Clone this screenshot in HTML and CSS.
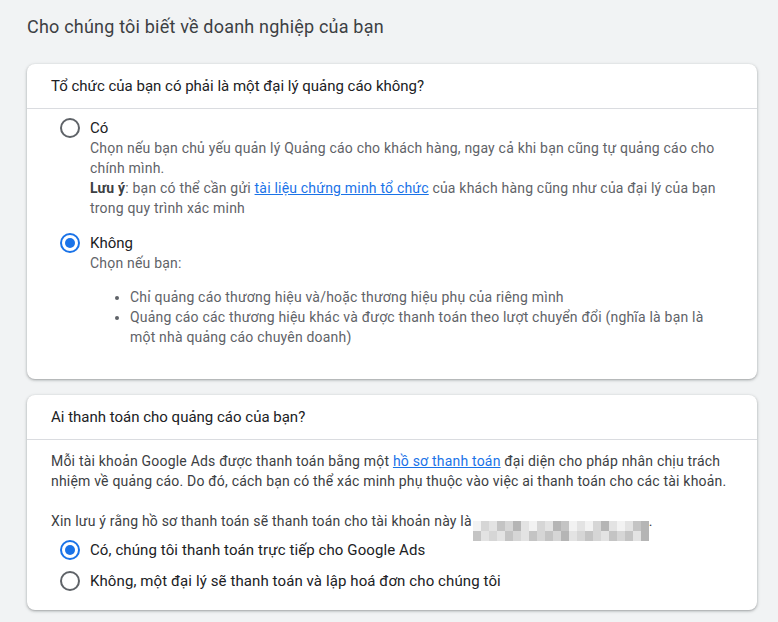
FILE: index.html
```html
<!DOCTYPE html>
<html lang="vi">
<head>
    <meta charset="UTF-8">
    <meta name="viewport" content="width=device-width, initial-scale=1.0">
    <title>Doanh nghiệp của bạn</title>
    <link rel="stylesheet" href="styles.css">
</head>
<body>
    <div class="page">
        <h1 class="page-title">Cho chúng tôi biết về doanh nghiệp của bạn</h1>

        <div class="card">
            <div class="card-header">Tổ chức của bạn có phải là một đại lý quảng cáo không?</div>
            <div class="card-body card-body-agency">
                <div class="option">
                    <span class="radio"></span>
                    <div class="option-text">
                        <div class="option-label">Có</div>
                        <div class="option-desc">
                            Chọn nếu bạn chủ yếu quản lý Quảng cáo cho khách hàng, ngay cả khi bạn cũng tự quảng cáo cho chính mình.<br>
                            <strong>Lưu ý</strong>: bạn có thể cần gửi <a href="#">tài liệu chứng minh tổ chức</a> của khách hàng cũng như của đại lý của bạn trong quy trình xác minh
                        </div>
                    </div>
                </div>
                <div class="option option-second">
                    <span class="radio checked"></span>
                    <div class="option-text">
                        <div class="option-label">Không</div>
                        <div class="option-desc">
                            Chọn nếu bạn:
                            <ul>
                                <li>Chỉ quảng cáo thương hiệu và/hoặc thương hiệu phụ của riêng mình</li>
                                <li>Quảng cáo các thương hiệu khác và được thanh toán theo lượt chuyển đổi (nghĩa là bạn là một nhà quảng cáo chuyên doanh)</li>
                            </ul>
                        </div>
                    </div>
                </div>
            </div>
        </div>

        <div class="card">
            <div class="card-header">Ai thanh toán cho quảng cáo của bạn?</div>
            <div class="card-body card-body-payer">
                <p class="para">Mỗi tài khoản Google Ads được thanh toán bằng một <a href="#">hồ sơ thanh toán</a> đại diện cho pháp nhân chịu trách nhiệm về quảng cáo. Do đó, cách bạn có thể xác minh phụ thuộc vào việc ai thanh toán cho các tài khoản.</p>
                <p class="para para-note">Xin lưu ý rằng hồ sơ thanh toán sẽ thanh toán cho tài khoản này là<span class="blurred">
                    <span class="px a"></span><span class="px c"></span><span class="px b"></span><span class="px d"></span><span class="px c"></span><span class="px e"></span><span class="px b"></span><span class="px a"></span><span class="px c"></span><span class="px b"></span><span class="px e"></span><span class="px d"></span><span class="px a"></span><span class="px b"></span><span class="px a"></span><span class="px c"></span><span class="px e"></span><span class="px b"></span><span class="px a"></span><span class="px b"></span><span class="px d"></span><span class="px e"></span>
                    <span class="px d"></span><span class="px b"></span><span class="px c"></span><span class="px b"></span><span class="px d"></span><span class="px c"></span><span class="px b"></span><span class="px d"></span><span class="px c"></span><span class="px d"></span><span class="px c"></span><span class="px e"></span><span class="px b"></span><span class="px c"></span><span class="px d"></span><span class="px c"></span><span class="px b"></span><span class="px d"></span><span class="px c"></span><span class="px d"></span><span class="px b"></span><span class="px e"></span>
                </span>.</p>
                <div class="choice choice-first">
                    <span class="radio checked"></span>
                    <span class="choice-label">Có, chúng tôi thanh toán trực tiếp cho Google Ads</span>
                </div>
                <div class="choice">
                    <span class="radio"></span>
                    <span class="choice-label">Không, một đại lý sẽ thanh toán và lập hoá đơn cho chúng tôi</span>
                </div>
            </div>
        </div>
    </div>
</body>
</html>
```

FILE: styles.css
```css
body {
    margin: 0;
    background-color: #f1f3f4;
    font-family: Roboto, "Noto Sans", Arial, sans-serif;
    color: #202124;
}
.page {
    padding: 14px 21px 0 27px;
}
.page-title {
    margin: 0 0 24px 0;
    font-size: 18px;
    font-weight: 400;
    line-height: 26px;
    letter-spacing: 0.2px;
    color: #3c4043;
}
.card {
    background-color: #fff;
    border-radius: 8px;
    box-shadow: 0 1px 2px rgba(60, 64, 67, 0.3), 0 1px 3px 1px rgba(60, 64, 67, 0.15);
    margin-bottom: 16px;
}
.card-header {
    height: 44px;
    line-height: 44px;
    padding: 0 24px;
    font-size: 15px;
    border-bottom: 1px solid #dadce0;
}
.card-body {
    padding: 0 28px 0 24px;
    font-size: 14px;
    line-height: 20px;
    letter-spacing: 0.2px;
}
.card-body-agency {
    padding-top: 9px;
    padding-bottom: 32px;
}
.card-body-payer {
    padding-top: 11px;
    padding-bottom: 14px;
}
.option {
    display: flex;
    align-items: flex-start;
}
.option-second {
    margin-top: 15px;
}
.radio {
    flex: none;
    box-sizing: border-box;
    width: 20px;
    height: 20px;
    margin: 0 10px 0 9px;
    border: 2px solid #5f6368;
    border-radius: 50%;
    position: relative;
}
.radio.checked {
    border-color: #1a73e8;
}
.radio.checked::after {
    content: "";
    position: absolute;
    left: 3px;
    top: 3px;
    width: 10px;
    height: 10px;
    border-radius: 50%;
    background-color: #1a73e8;
}
.option-label {
    font-size: 15px;
    letter-spacing: 0;
    color: #202124;
}
.option-desc {
    color: #5f6368;
}
.option-desc strong {
    color: #3c4043;
}
.option-desc ul {
    margin: 14px 0 0 0;
    padding-left: 40px;
}
a {
    color: #1a73e8;
}
.para {
    margin: 0;
    color: #3c4043;
}
.para-note {
    margin-top: 20px;
    height: 20px;
}
.blurred {
    display: inline-grid;
    grid-template-columns: repeat(22, 8px);
    grid-auto-rows: 10px;
    vertical-align: -5px;
    margin-left: 1px;
}
.px.a { background-color: #f2f2f2; }
.px.b { background-color: #e3e3e3; }
.px.c { background-color: #d6d6d6; }
.px.d { background-color: #c4c4c4; }
.px.e { background-color: #b5b5b5; }
.choice {
    display: flex;
    align-items: center;
    height: 31px;
}
.choice-first {
    margin-top: 3px;
}
.choice-label {
    font-size: 15px;
    letter-spacing: 0.1px;
    color: #202124;
}
```
